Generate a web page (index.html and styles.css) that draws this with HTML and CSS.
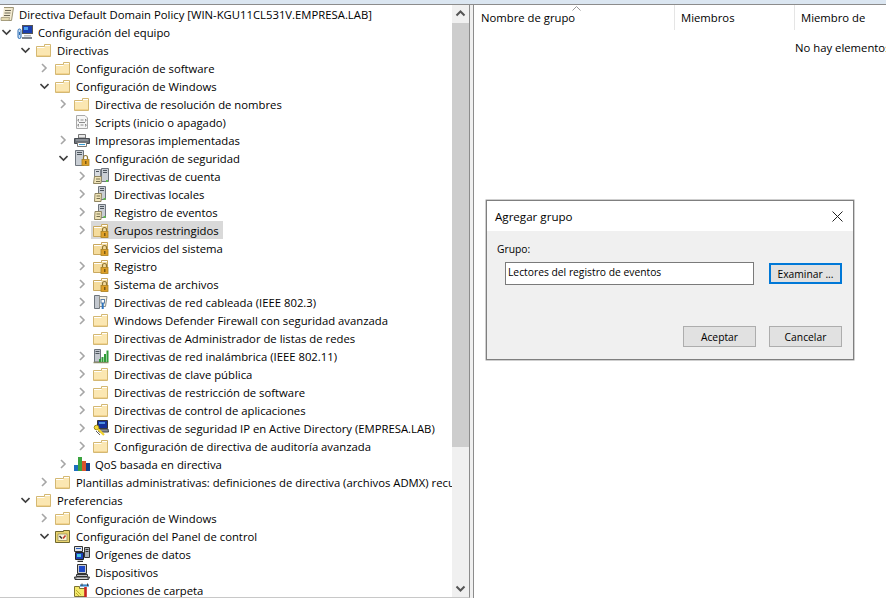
FILE: index.html
```html
<!DOCTYPE html>
<html lang="es">
<head>
<meta charset="utf-8">
<title>Agregar grupo</title>
<link rel="stylesheet" href="styles.css">
</head>
<body>
<svg class="defs" width="0" height="0" aria-hidden="true">
  <defs>
    <symbol id="chev-r" viewBox="0 0 9 18"><path d="M2 5l4 4-4 4" fill="none" stroke="#a6a6a6" stroke-width="1.6"/></symbol>
    <symbol id="chev-d" viewBox="0 0 9 18"><path d="M0.5 7l4 4 4-4" fill="none" stroke="#404040" stroke-width="1.6"/></symbol>
    <symbol id="folder" viewBox="0 0 16 16">
      <path d="M.5 4.500V14.500H14.500V2.500H8.500V4.500Z" fill="#fbe7b2" stroke="#d4b873"/>
      <path d="M9 3.500H14M1 5.500H8.500" stroke="#fff" fill="none"/>
      <path d="M1 13.500H14" stroke="#f2d38e"/>
    </symbol>
    <symbol id="lock" viewBox="0 0 16 16">
      <path d="M9.500 9V7.500a2 2 0 0 1 4 0V9" fill="none" stroke="#8d7435" stroke-width="1.200"/>
      <rect x="8" y="9.500" width="7" height="6" fill="#dfa028" stroke="#a87f1f" stroke-width=".8"/>
      <rect x="11" y="11" width="1.500" height="3" fill="#7a5a12"/>
    </symbol>
    <symbol id="folder-lock" viewBox="0 0 16 16">
      <path d="M.5 4.500V14.500H14.500V2.500H8.500V4.500Z" fill="#f5dc9d" stroke="#c9a85f"/>
      <path d="M9 3.500H14M1 5.500H8.500" stroke="#fff" fill="none"/>
      <use href="#lock"/>
    </symbol>
    <symbol id="policy" viewBox="0 0 16 16">
      <path d="M4 1.500H13.500L11.500 14.500H1.500L2.500 11.500" fill="#f2ead0" stroke="#9c9476"/>
      <path d="M5 4.500H11M4.500 7H10.500M4 9.500H10" stroke="#6f6a58"/>
      <path d="M1 11.500H9.500L9 14.500H1Z" fill="#e4d9b0" stroke="#9c9476" stroke-width=".7"/>
    </symbol>
    <symbol id="computer" viewBox="0 0 16 16">
      <rect x="5.500" y="1.500" width="10" height="8" fill="#1b3fb0" stroke="#555"/>
      <path d="M7 3h4v3H7z" fill="#4fa3ef"/>
      <path d="M7 11H14V12.500H7Z" fill="#b7bcc4"/>
      <path d="M5 13H15V15H5Z" fill="#7d848d"/>
      <path d="M1 6.500a1.500 1.500 0 0 1 3 0V13a1.500 1.500 0 0 1-3 0Z" fill="#cfe0f2" stroke="#2a6db5"/>
      <path d="M2.500 8v3" stroke="#2a6db5"/>
    </symbol>
    <symbol id="script" viewBox="0 0 16 16">
      <path d="M2.500 1.500H11L13.500 4V14.500H2.500Z" fill="#f6f6f6" stroke="#a9a9a9"/>
      <path d="M5 5.500H4V7H5M11 5.500H12V7H11M5 10.500H4V12H5M11 10.500H12V12H11M6.500 6H9.500M6.500 11H9.500M5 8.500H11" stroke="#8a8a8a" fill="none"/>
    </symbol>
    <symbol id="printer" viewBox="0 0 16 16">
      <path d="M4.500 2.500H11.500V6H4.500Z" fill="#e9e9e9" stroke="#777"/>
      <path d="M.5 6.500H15.500V11.500H.5Z" fill="#6b7078" stroke="#484c52"/>
      <path d="M2 8H14" stroke="#a9adb2"/>
      <path d="M3.500 10.500H12.500V14.500H3.500Z" fill="#fafafa" stroke="#777"/>
      <path d="M5 12.500H11" stroke="#3aa0d8"/>
    </symbol>
    <symbol id="server-lock" viewBox="0 0 16 16">
      <path d="M1.500 .5H9.500V15.500H1.500Z" fill="#c9ced4" stroke="#6e757d"/>
      <path d="M3 2.500H8M3 4.500H8" stroke="#4e565e"/>
      <use href="#lock"/>
    </symbol>
    <symbol id="server-doc" viewBox="0 0 16 16">
      <path d="M5.500 .5H12.500V13.500H5.500Z" fill="#c9ced4" stroke="#6e757d"/>
      <path d="M7 2.500H11M7 4.500H11" stroke="#4e565e"/>
      <rect x="10.500" y="12" width="2" height="2" fill="#5ec04a"/>
      <path d="M2 7.500H8.500L8 15.500H1.500Z" fill="#f0e4b8" stroke="#8f8560"/>
      <path d="M3.500 10H7M3.500 12.500H7" stroke="#77704f"/>
    </symbol>
    <symbol id="server-doc2" viewBox="0 0 16 16">
      <path d="M1.500 1.500H7.500V9H1.500Z" fill="#d7dbe0" stroke="#7b828a"/>
      <path d="M8.500 .5H15.500V13.500H8.500Z" fill="#c9ced4" stroke="#6e757d"/>
      <path d="M10 2.500H14M10 4.500H14M3 3.500H6" stroke="#4e565e"/>
      <rect x="13" y="12" width="2" height="2" fill="#5ec04a"/>
      <path d="M1.500 8.500H8.500L8 15.500H.5Z" fill="#f0e4b8" stroke="#8f8560"/>
      <path d="M3 11H7M3 13.500H7" stroke="#77704f"/>
    </symbol>
    <symbol id="wired" viewBox="0 0 16 16">
      <path d="M1.500 1.500H6.500V14.500H1.500Z" fill="#c3c8cf" stroke="#6e757d"/>
      <path d="M6.500 2.500H14L12.500 12.500H6.500Z" fill="#f4f0e0" stroke="#8f8f8a"/>
      <rect x="8" y="5.500" width="3.500" height="3.500" fill="#fff" stroke="#5b7fa8"/>
      <path d="M9.700 9V15" stroke="#2f75c0" stroke-width="2"/>
    </symbol>
    <symbol id="wireless" viewBox="0 0 16 16">
      <path d="M1.500 1.500H7.500V14H1.500Z" fill="#c3c8cf" stroke="#6e757d"/>
      <path d="M2.500 3.500H6.500M2.500 5.500H6.500" stroke="#4e565e"/>
      <path d="M.5 14.500H15.500" stroke="#8d8d6e" stroke-width="1.500"/>
      <path d="M6 14H8V11H6ZM8.500 14H10.500V9H8.500ZM11 14H13V6H11ZM13.500 14H15.500V2.500H13.500Z" fill="#2f9c38"/>
    </symbol>
    <symbol id="ipsec" viewBox="0 0 16 16">
      <path d="M4.500 .5H14.500V8.500H4.500Z" fill="#14309a" stroke="#333"/>
      <path d="M5 9H15L15.500 12H6Z" fill="#8b9097" stroke="#444"/>
      <path d="M6 2H12V4H6Z" fill="#4c8fe0"/>
      <circle cx="3.500" cy="7.500" r="2.300" fill="#f7dc3a" stroke="#9a861a"/>
      <path d="M5 9L11 15" stroke="#f2d22e" stroke-width="2.200"/>
      <path d="M3 11L7 15" stroke="#333" stroke-width=".8"/>
    </symbol>
    <symbol id="qos" viewBox="0 0 16 16">
      <rect x="0" y="9" width="4" height="6" fill="#1c6fbf"/>
      <rect x="4" y="1" width="4" height="14" fill="#3aa33f"/>
      <rect x="8" y="5" width="4" height="10" fill="#d9532c"/>
      <rect x="12" y="7" width="4" height="8" fill="#123f8a"/>
    </symbol>
    <symbol id="panel" viewBox="0 0 16 16">
      <path d="M.5 3.500V14.500H14.500V2.500H8.500V3.500Z" fill="#e8d36f" stroke="#6f6830"/>
      <rect x="3" y="6" width="9" height="6.500" fill="#fbf6d8" stroke="#8a8450" stroke-width=".7"/>
      <path d="M4.500 8L7 10.500" stroke="#333" stroke-width="1.500"/>
      <path d="M10.500 7.500L8 10.500" stroke="#c2362c" stroke-width="1.500"/>
    </symbol>
    <symbol id="datasource" viewBox="0 0 16 16">
      <path d="M.5 .5H8.500V5.500H.5Z" fill="#dfe3e8" stroke="#333"/>
      <path d="M2 2.500H7" stroke="#2b5fbd"/>
      <path d="M10.500 1.500H15.500V11.500H10.500Z" fill="#aeb3ba" stroke="#333"/>
      <path d="M11.500 3.500H14.500M11.500 5.500H14.500" stroke="#333"/>
      <path d="M1.500 6.500H9.500V13.500H1.500Z" fill="#1e3fb4" stroke="#222"/>
      <path d="M3 8H7V11H3Z" fill="#45c6e6"/>
      <path d="M3.500 15.500H9" stroke="#333" stroke-width="1.500"/>
    </symbol>
    <symbol id="device" viewBox="0 0 16 16">
      <path d="M3.500 .5H12.500V9.500H3.500Z" fill="#c8ccd2" stroke="#333"/>
      <path d="M5 2H11V8H5Z" fill="#1e49c8"/>
      <path d="M2.500 10.500H13.500V12.500H2.500Z" fill="#b9bdc3" stroke="#333"/>
      <path d="M.5 13H15.500L14.500 15.500H1Z" fill="#8e9299" stroke="#333"/>
      <path d="M2.500 14.200H13" stroke="#eee"/>
    </symbol>
    <symbol id="folder-opt" viewBox="0 0 16 16">
      <path d="M.5 4.500V14.500H11.500V6.500H5.500V4.500Z" fill="#f4e86a" stroke="#7c7232"/>
      <path d="M2 8L7 13M2 11L5 14" stroke="#b9ad2d"/>
      <path d="M6 3.500H15" stroke="#3a86c8" stroke-width="2.200"/>
      <path d="M8 1.500L8 4M13.500 1.500V4" stroke="#444"/>
      <path d="M11.500 5V15" stroke="#c7241f" stroke-width="2.600"/>
    </symbol>
  </defs>
</svg>

<div class="topbar"></div>
<main class="panes">
  <section class="tree-pane">
    <div class="tree">
      <div class="row root"><svg class="icon"><use href="#policy"/></svg><span>Directiva Default Domain Policy [WIN-KGU11CL531V.EMPRESA.LAB]</span></div>
      <div class="row l0"><svg class="chev"><use href="#chev-d"/></svg><svg class="icon"><use href="#computer"/></svg><span>Configuración del equipo</span></div>
      <div class="row l1"><svg class="chev"><use href="#chev-d"/></svg><svg class="icon"><use href="#folder"/></svg><span>Directivas</span></div>
      <div class="row l2"><svg class="chev"><use href="#chev-r"/></svg><svg class="icon"><use href="#folder"/></svg><span>Configuración de software</span></div>
      <div class="row l2"><svg class="chev"><use href="#chev-d"/></svg><svg class="icon"><use href="#folder"/></svg><span>Configuración de Windows</span></div>
      <div class="row l3"><svg class="chev"><use href="#chev-r"/></svg><svg class="icon"><use href="#folder"/></svg><span>Directiva de resolución de nombres</span></div>
      <div class="row l3"><svg class="chev"></svg><svg class="icon"><use href="#script"/></svg><span>Scripts (inicio o apagado)</span></div>
      <div class="row l3"><svg class="chev"><use href="#chev-r"/></svg><svg class="icon"><use href="#printer"/></svg><span>Impresoras implementadas</span></div>
      <div class="row l3"><svg class="chev"><use href="#chev-d"/></svg><svg class="icon"><use href="#server-lock"/></svg><span>Configuración de seguridad</span></div>
      <div class="row l4"><svg class="chev"><use href="#chev-r"/></svg><svg class="icon"><use href="#server-doc2"/></svg><span>Directivas de cuenta</span></div>
      <div class="row l4"><svg class="chev"><use href="#chev-r"/></svg><svg class="icon"><use href="#server-doc"/></svg><span>Directivas locales</span></div>
      <div class="row l4"><svg class="chev"><use href="#chev-r"/></svg><svg class="icon"><use href="#server-doc"/></svg><span>Registro de eventos</span></div>
      <div class="row l4"><svg class="chev"><use href="#chev-r"/></svg><div class="selected"><svg class="icon"><use href="#folder-lock"/></svg><span>Grupos restringidos</span></div></div>
      <div class="row l4"><svg class="chev"></svg><svg class="icon"><use href="#folder-lock"/></svg><span>Servicios del sistema</span></div>
      <div class="row l4"><svg class="chev"><use href="#chev-r"/></svg><svg class="icon"><use href="#folder-lock"/></svg><span>Registro</span></div>
      <div class="row l4"><svg class="chev"><use href="#chev-r"/></svg><svg class="icon"><use href="#folder-lock"/></svg><span>Sistema de archivos</span></div>
      <div class="row l4"><svg class="chev"><use href="#chev-r"/></svg><svg class="icon"><use href="#wired"/></svg><span>Directivas de red cableada (IEEE 802.3)</span></div>
      <div class="row l4"><svg class="chev"><use href="#chev-r"/></svg><svg class="icon"><use href="#folder"/></svg><span>Windows Defender Firewall con seguridad avanzada</span></div>
      <div class="row l4"><svg class="chev"></svg><svg class="icon"><use href="#folder"/></svg><span>Directivas de Administrador de listas de redes</span></div>
      <div class="row l4"><svg class="chev"><use href="#chev-r"/></svg><svg class="icon"><use href="#wireless"/></svg><span>Directivas de red inalámbrica (IEEE 802.11)</span></div>
      <div class="row l4"><svg class="chev"><use href="#chev-r"/></svg><svg class="icon"><use href="#folder"/></svg><span>Directivas de clave pública</span></div>
      <div class="row l4"><svg class="chev"><use href="#chev-r"/></svg><svg class="icon"><use href="#folder"/></svg><span>Directivas de restricción de software</span></div>
      <div class="row l4"><svg class="chev"><use href="#chev-r"/></svg><svg class="icon"><use href="#folder"/></svg><span>Directivas de control de aplicaciones</span></div>
      <div class="row l4"><svg class="chev"><use href="#chev-r"/></svg><svg class="icon"><use href="#ipsec"/></svg><span>Directivas de seguridad IP en Active Directory (EMPRESA.LAB)</span></div>
      <div class="row l4"><svg class="chev"><use href="#chev-r"/></svg><svg class="icon"><use href="#folder"/></svg><span>Configuración de directiva de auditoría avanzada</span></div>
      <div class="row l3"><svg class="chev"><use href="#chev-r"/></svg><svg class="icon"><use href="#qos"/></svg><span>QoS basada en directiva</span></div>
      <div class="row l2"><svg class="chev"><use href="#chev-r"/></svg><svg class="icon"><use href="#folder"/></svg><span>Plantillas administrativas: definiciones de directiva (archivos ADMX) recuperadas del equipo local</span></div>
      <div class="row l1"><svg class="chev"><use href="#chev-d"/></svg><svg class="icon"><use href="#folder"/></svg><span>Preferencias</span></div>
      <div class="row l2"><svg class="chev"><use href="#chev-r"/></svg><svg class="icon"><use href="#folder"/></svg><span>Configuración de Windows</span></div>
      <div class="row l2"><svg class="chev"><use href="#chev-d"/></svg><svg class="icon"><use href="#panel"/></svg><span>Configuración del Panel de control</span></div>
      <div class="row l3"><svg class="chev"></svg><svg class="icon"><use href="#datasource"/></svg><span>Orígenes de datos</span></div>
      <div class="row l3"><svg class="chev"></svg><svg class="icon"><use href="#device"/></svg><span>Dispositivos</span></div>
      <div class="row l3"><svg class="chev"></svg><svg class="icon"><use href="#folder-opt"/></svg><span>Opciones de carpeta</span></div>
    </div>
    <div class="scrollbar">
      <svg class="sb-arrow" viewBox="0 0 17 18"><path d="M4.500 10.500L8.500 6.500l4 4" fill="none" stroke="#555" stroke-width="2"/></svg>
      <div class="sb-thumb"></div>
      <div class="sb-rest"></div>
      <svg class="sb-arrow" viewBox="0 0 17 18"><path d="M4.500 7.500l4 4 4-4" fill="none" stroke="#555" stroke-width="2"/></svg>
    </div>
  </section>
  <section class="list-pane">
    <div class="list-head">
      <div class="col col-name">Nombre de grupo<svg class="sort" viewBox="0 0 9 5"><path d="M.5 4.500l4-4 4 4" fill="none" stroke="#999"/></svg></div>
      <div class="col col-members">Miembros</div>
      <div class="col col-memberof">Miembro de</div>
    </div>
    <div class="list-empty">No hay elementos para mostrar en esta vista.</div>
  </section>
</main>

<div class="dialog" role="dialog">
  <header class="dlg-title">
    <span>Agregar grupo</span>
    <svg class="dlg-close" viewBox="0 0 11 11"><path d="M.5 .5l10 10M10.500 .5l-10 10" stroke="#222" fill="none"/></svg>
  </header>
  <div class="dlg-body">
    <label class="dlg-label">Grupo:</label>
    <div class="dlg-input-row">
      <div class="dlg-input">Lectores del registro de eventos</div>
      <button class="btn btn-focus">Examinar ...</button>
    </div>
    <div class="dlg-actions">
      <button class="btn">Aceptar</button>
      <button class="btn">Cancelar</button>
    </div>
  </div>
</div>
</body>
</html>
```
FILE: styles.css
```css
* { box-sizing: border-box; }
html, body { margin: 0; height: 100%; overflow: hidden; }
body {
  width: 886px;
  height: 598px;
  background: #fff;
  color: #000;
  font-family: "Open Sans", "Noto Sans", sans-serif;
  font-size: 11.3px;
  display: flex;
  flex-direction: column;
}
.defs { position: absolute; }

.topbar { height: 5px; flex: none; background: #dbe6f1; border-bottom: 1px solid #8c8c8c; }

.panes { flex: 1; display: flex; min-height: 0; background: #f0f0f0; }

.tree-pane {
  width: 470px;
  flex: none;
  display: flex;
  background: #fff;
  border-right: 1px solid #8c8c8c;
  border-bottom: 1px solid #c8c8c8;
}
.tree { width: 452px; flex: none; overflow: hidden; }
.row { height: 18px; display: flex; align-items: center; white-space: nowrap; }
.root .icon { margin-right: 3px; }
.l0 { padding-left: 0; }
.l1 { padding-left: 19px; }
.l2 { padding-left: 38px; }
.l3 { padding-left: 57px; }
.l4 { padding-left: 76px; }
.chev { width: 9px; height: 18px; flex: none; margin-left: 2px; margin-right: 6px; }
.icon { width: 16px; height: 16px; flex: none; margin-right: 5px; }
.selected { display: flex; align-items: center; height: 18px; background: #d9d9d9; margin-left: -2px; padding: 0 4px 0 2px; }

.scrollbar { width: 17px; flex: none; background: #f0f0f0; display: flex; flex-direction: column; }
.sb-arrow { width: 17px; height: 18px; flex: none; }
.sb-thumb { height: 424px; flex: none; background: #cdcdcd; }
.sb-rest { flex: 1; }

.list-pane {
  flex: 1;
  min-width: 0;
  margin-left: 3px;
  background: #fff;
  border-left: 1px solid #8c8c8c;
  overflow: hidden;
}
.list-head { display: flex; height: 25px; }
.col { position: relative; height: 25px; padding: 2px 0 0 6px; line-height: 22px; border-right: 1px solid #e5e5e5; flex: none; white-space: nowrap; }
.col-name { width: 201px; padding-left: 7px; }
.col-members { width: 120px; }
.col-memberof { width: 120px; border-right: 0; }
.sort { position: absolute; left: 98px; top: 1px; width: 9px; height: 5px; }
.list-empty { padding: 9px 0 0 321px; white-space: nowrap; line-height: 18px; }

.dialog {
  position: absolute;
  left: 486px;
  top: 200px;
  width: 368px;
  height: 160px;
  background: #f0f0f0;
  border: 1px solid #7f7f7f;
  box-shadow: 0 0 0 .5px #a0a0a0;
  display: flex;
  flex-direction: column;
  font-size: 10.3px;
}
.dlg-title {
  height: 30px;
  flex: none;
  background: #fff;
  display: flex;
  align-items: center;
  justify-content: space-between;
  padding: 0 10px 0 8px;
  font-size: 11.6px;
}
.dlg-close { width: 11px; height: 11px; }
.dlg-body { flex: 1; display: flex; flex-direction: column; padding: 10px 11px 12px 10px; }
.dlg-label { line-height: 16px; height: 16px; }
.dlg-input-row { display: flex; align-items: center; justify-content: space-between; margin: 5px 0 0 8px; }
.dlg-input {
  width: 249px;
  height: 23px;
  background: #fff;
  border: 1px solid #7a7a7a;
  padding: 0 2px;
  line-height: 18px;
  white-space: nowrap;
}
.btn {
  width: 73px;
  height: 21px;
  padding: 0;
  background: #e1e1e1;
  border: 1px solid #adadad;
  color: #000;
  font: inherit;
  line-height: 18px;
}
.btn-focus { border: 2px solid #0078d7; }
.dlg-actions { display: flex; justify-content: flex-end; gap: 13px; margin-top: auto; }
```
